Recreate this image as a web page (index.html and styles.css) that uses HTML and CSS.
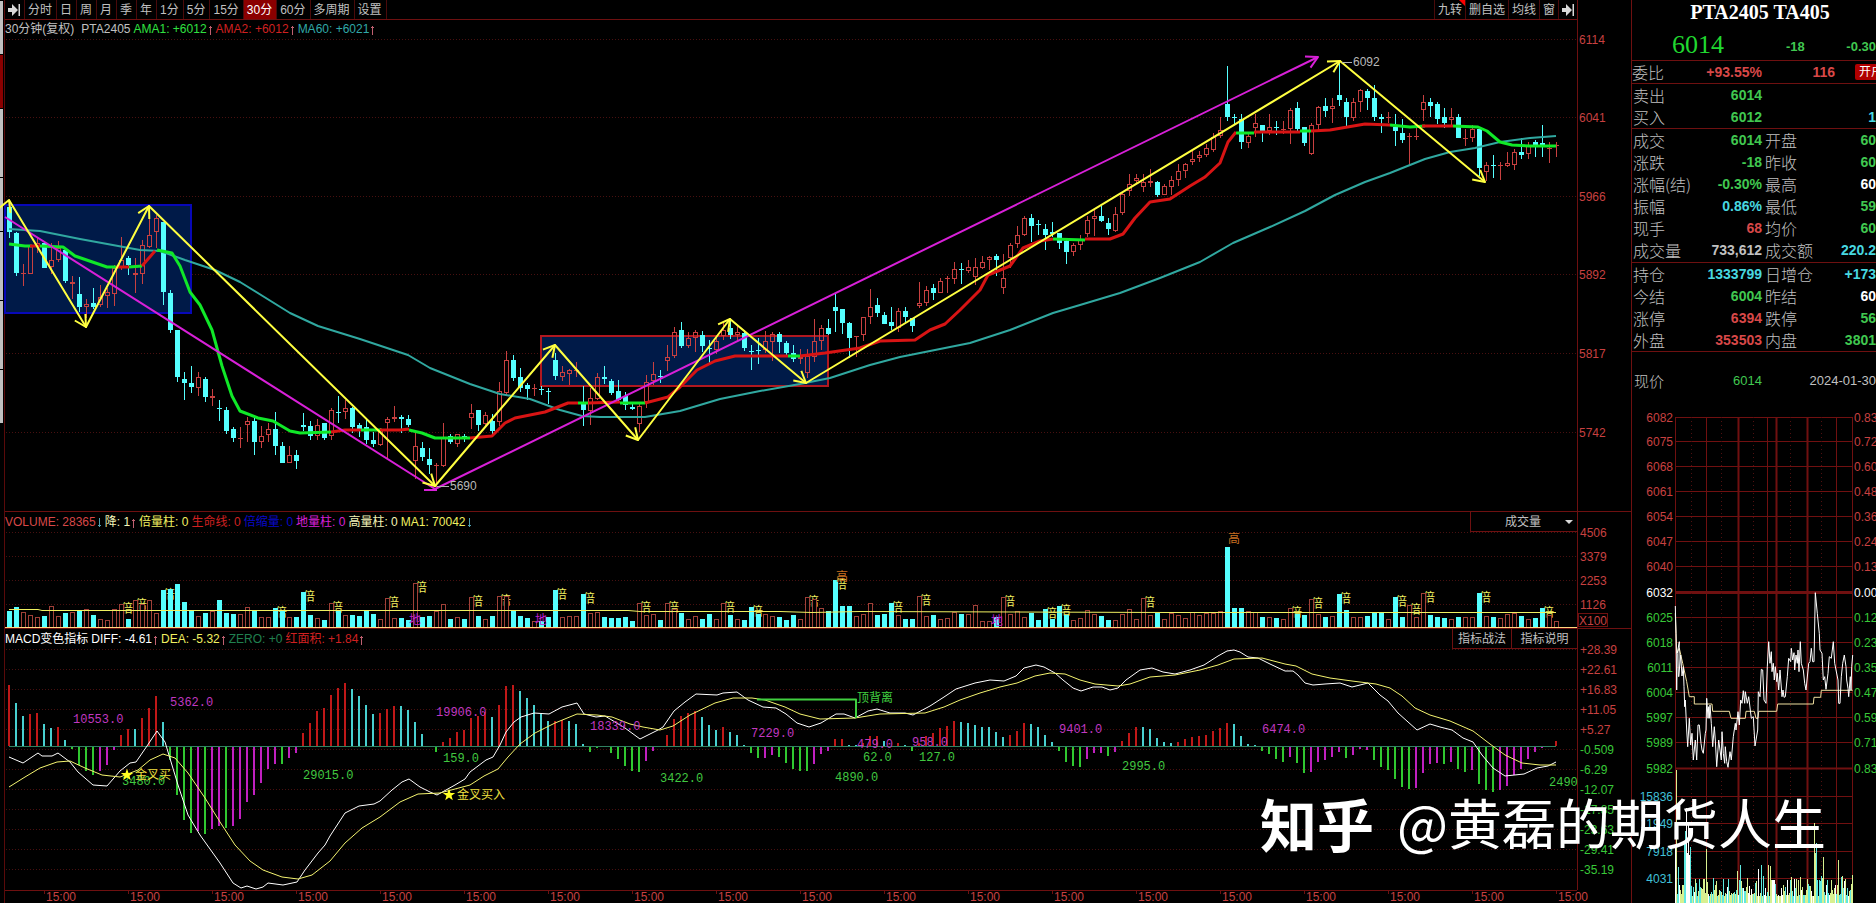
FILE: index.html
```html
<!DOCTYPE html>
<html lang="zh-CN">
<head>
<meta charset="utf-8">
<title>PTA2405 30分钟</title>
<link rel="stylesheet" href="styles.css">
</head>
<body>
<nav class="rail" aria-label="侧栏">
  <span class="rail-tab"></span><span class="rail-tab active"></span><span class="rail-tab tall"></span><span class="rail-tab"></span><span class="rail-tab tall"></span><span class="rail-tab tall"></span><span class="rail-tab"></span>
</nav>
<main class="charts">
  <header class="toolbar">
    <div class="periods">
      <button aria-label="展开"><svg width="12" height="12" viewBox="0 0 12 12"><path d="M0 4h4V0l6 6-6 6V8H0zM10.500 0h1.500v12h-1.500z" fill="#d8d8d8"/></svg></button>
      <button>分时</button><button>日</button><button>周</button><button>月</button><button>季</button><button>年</button><button>1分</button><button>5分</button><button>15分</button><button class="on">30分</button><button>60分</button><button>多周期</button><button>设置</button>
    </div>
    <div class="tools">
      <button class="flag">九转</button><button>删自选</button><button>均线</button><button>窗</button><button aria-label="收起"><svg width="12" height="12" viewBox="0 0 12 12"><path d="M0 4h4V0l6 6-6 6V8H0zM10.500 0h1.500v12h-1.500z" fill="#d8d8d8"/></svg></button>
    </div>
  </header>
  <section class="panel">
    <div class="legend">
      <span class="grey wide">30分钟(复权)</span><span class="grey">PTA2405</span>
      <span class="green">AMA1: +6012<i class="up"></i></span><span class="red">AMA2: +6012<i class="up"></i></span><span class="teal">MA60: +6021<i class="up"></i></span>
    </div>
    <svg id="price" class="plot" viewBox="5 32 1626 479"></svg>
  </section>
  <section class="panel ruled">
    <div class="legend">
      <span class="rose">VOLUME: 28365<i class="down"></i></span><span class="cream">降: 1<i class="up"></i></span><span class="yellow">倍量柱: 0</span><span class="red">生命线: 0</span><span class="blue">倍缩量: 0</span><span class="magenta">地量柱: 0</span><span class="cream">高量柱: 0</span><span class="yellow">MA1: 70042<i class="down"></i></span>
      <span class="picker"><select aria-label="副图指标"><option>成交量</option></select></span>
    </div>
    <svg id="volume" class="plot" viewBox="5 531 1626 97"></svg>
  </section>
  <section class="panel ruled">
    <div class="legend">
      <span class="white">MACD变色指标</span><span class="white">DIFF: -4.61<i class="up"></i></span><span class="yellow">DEA: -5.32<i class="up"></i></span><span class="jade">ZERO: +0</span><span class="red">红面积: +1.84<i class="up"></i></span>
      <span class="links"><button>指标战法</button><button>指标说明</button></span>
    </div>
    <svg id="macd" class="plot" viewBox="5 648 1626 255"></svg>
  </section>
</main>
<aside class="quote">
  <h1>PTA2405 TA405</h1>
  <div class="last"><strong>6014</strong><b>-18</b><b class="end">-0.30</b></div>
  <div class="rows ratio"><div><span>委比</span><b class="rose">+93.55%</b><b class="rose mid">116</b><button>开户</button></div></div>
  <table class="rows">
    <tr><th>卖出</th><td>6014</td><th></th><td></td></tr>
    <tr><th>买入</th><td>6012</td><th></th><td class="cyan">1</td></tr>
  </table>
  <table class="rows roomy">
    <tr><th>成交</th><td>6014</td><th>开盘</th><td>60</td></tr>
    <tr><th>涨跌</th><td>-18</td><th>昨收</th><td>60</td></tr>
    <tr><th>涨幅(结)</th><td>-0.30%</td><th>最高</th><td class="white">60</td></tr>
    <tr><th>振幅</th><td class="cyan">0.86%</td><th>最低</th><td>59</td></tr>
    <tr><th>现手</th><td class="rose">68</td><th>均价</th><td>60</td></tr>
    <tr><th>成交量</th><td class="grey">733,612</td><th>成交额</th><td class="cyan">220.2</td></tr>
  </table>
  <table class="rows">
    <tr><th>持仓</th><td class="cyan">1333799</td><th>日增仓</th><td class="cyan">+173</td></tr>
    <tr><th>今结</th><td>6004</td><th>昨结</th><td class="white">60</td></tr>
    <tr><th>涨停</th><td class="rose">6394</td><th>跌停</th><td>56</td></tr>
    <tr><th>外盘</th><td class="rose">353503</td><th>内盘</th><td>3801</td></tr>
  </table>
  <div class="now"><span>现价</span><em>6014</em><time>2024-01-30</time></div>
  <svg id="intraday" class="plot" viewBox="1632 410 244 493"></svg>
</aside>
<div class="watermark"><b>知乎</b><span>@黄磊的期货人生</span></div>
<script src="chart.js"></script>
</body>
</html>
```

FILE: styles.css
```css
* { box-sizing: border-box; }
body {
  margin: 0;
  min-height: 100vh;
  display: flex;
  position: relative;
  overflow: hidden;
  background: #000;
  color: #c0c0c0;
  font: 12px/16px "Liberation Sans", "Noto Sans CJK SC", sans-serif;
}
button, select {
  font: inherit;
  color: inherit;
  background: none;
  border: 0;
  border-radius: 0;
  margin: 0;
  padding: 0;
  white-space: nowrap;
}
.rail { width: 4px; padding: 1px 1px 0 0; display: flex; flex-direction: column; gap: 1px; }
.rail-tab { height: 53px; background: #c0c0c0; }
.rail-tab.active { background: #8b0000; }
.rail-tab.tall { height: 68px; }

.charts {
  flex: 1;
  min-width: 0;
  border-left: 1px solid #5a0a0a;
  background: linear-gradient(#6e1010, #6e1010) right 53px top / 1px 890px no-repeat;
}
.toolbar {
  display: flex;
  justify-content: space-between;
  height: 20px;
  margin-right: 54px;
  border-bottom: 1px solid #6e1010;
}
.periods, .tools { display: flex; }
.toolbar button {
  height: 19px;
  padding: 1px 4px 0 3px;
  display: flex;
  align-items: center;
  border-right: 1px solid #4a0a0a;
}
.toolbar .on { background: #8b0000; color: #fff; }
.toolbar .tools button { padding: 1px 3px 0; border-right: 0; border-left: 1px solid #4a0a0a; }
.flag { position: relative; }
.flag::after {
  content: "";
  position: absolute;
  top: 0;
  right: 0;
  border: 3px solid;
  border-color: #f00 #f00 transparent transparent;
}

.panel { display: flex; flex-direction: column; }
.ruled { border-top: 1px solid #6e1010; }
.legend { display: flex; gap: 3px; height: 12px; line-height: 19px; white-space: nowrap; }
.ruled .legend { height: 19px; line-height: 20px; }
.wide { margin-right: 4px; }
.plot { display: block; width: 100%; height: auto; overflow: visible; }
.legend i { display: inline-block; width: 5px; height: 10px; margin-left: 1px; vertical-align: -2px; }
.up { background: linear-gradient(#c06070, #c06070) 2px 1px / 1px 9px no-repeat, linear-gradient(#c06070, #c06070) 1px 2px / 3px 1px no-repeat; }
.down { background: linear-gradient(#50a0b0, #50a0b0) 2px 0 / 1px 9px no-repeat, linear-gradient(#50a0b0, #50a0b0) 1px 7px / 3px 1px no-repeat; }
.picker {
  position: relative;
  margin: 0 53px 0 auto;
  width: 108px;
  height: 20px;
  border: 1px solid #6e1010;
  border-top: 0;
}
.picker select { width: 100%; height: 19px; appearance: none; padding-right: 2px; text-align-last: center; }
.picker::after {
  content: "";
  position: absolute;
  right: 4px;
  top: 8px;
  border: 4px solid transparent;
  border-top-color: #d8d8d8;
  border-bottom: 0;
}
.links { margin: 0 53px 0 auto; display: flex; height: 20px; }
.links button { width: 60px; border: 1px solid #6e1010; border-top: 0; }
.links button + button { width: 66px; border-left: 0; }

.grey { color: #c0c0c0; }
.white { color: #fff; }
.green { color: #30e040; }
.red { color: #d02020; }
.rose { color: #d84848; }
.teal { color: #30a8a8; }
.jade { color: #208050; }
.cyan { color: #48d8e0; }
.yellow { color: #f0f060; }
.cream { color: #f4f4b8; }
.blue { color: #0808c8; }
.magenta { color: #d820d8; }

.quote {
  width: 245px;
  flex: none;
  overflow: hidden;
  border-left: 1px solid #6e1010;
  color: #40c850;
  font-size: 14px;
}
.quote h1 {
  margin: 0;
  height: 28px;
  padding-left: 12px;
  font: bold 20px/24px "Liberation Serif", serif;
  color: #fff;
  text-align: center;
}
.last { display: grid; grid-template-columns: 114px 1fr auto; height: 32px; line-height: 38px; padding-left: 40px; font-size: 13px; }
.last strong { font: 26px/34px "Liberation Serif", serif; color: #20d830; }
.rows { border-top: 1px solid #6e1010; }
.ratio div { display: grid; grid-template-columns: 50px 80px 73px 1fr; height: 22px; align-items: center; text-align: right; }
.ratio span, .now span, th { color: #c0c0c0; font: 300 16px/20px "Noto Sans CJK SC", sans-serif; text-align: left; white-space: nowrap; }
.ratio button { width: 32px; height: 16px; margin-left: 20px; background: #b00000; color: #fff; font-size: 12px; border-radius: 2px; }
table { width: 100%; border-collapse: separate; border-spacing: 0; table-layout: fixed; }
th, td { padding: 0; height: 22px; line-height: 20px; }
th:nth-child(1) { width: 56px; padding-left: 1px; }
td:nth-child(2) { width: 74px; }
th:nth-child(3) { width: 54px; padding-left: 3px; }
td { text-align: right; font-weight: bold; }
.roomy { padding-bottom: 1px; }
.now {
  display: grid;
  grid-template-columns: 50px 80px 1fr;
  align-items: center;
  text-align: right;
  height: 59px;
  font-size: 13px;
  border-top: 1px solid #6e1010;
}
.now span { font-size: 15px; padding-left: 2px; }
.now em { font-style: normal; }
.now time { color: #c0c0c0; }
.watermark {
  position: absolute;
  left: 1260px;
  top: 782px;
  display: flex;
  gap: 23px;
  align-items: center;
  color: #fff;
  font: 400 54px/80px "Noto Sans CJK SC", sans-serif;
  white-space: nowrap;
}
.watermark b { font-size: 57px; font-weight: 700; line-height: 76px; }

.plot text { font: 12px "Liberation Sans", "Noto Sans CJK SC", sans-serif; dominant-baseline: central; }
.plot .mono { font: 12px "Liberation Mono", monospace; }
.grid { stroke: #481010; stroke-dasharray: 1 2; }
```

FILE: chart.js
```js
const RED = '#c84040', CYAN = '#5ff', X0 = 9.3, STEP = 7;
const cx = i => Math.round(X0 + i * STEP);
const line = (x1, y1, x2, y2, stroke, w = 1, extra = '') =>
  `<line x1="${x1}" y1="${y1}" x2="${x2}" y2="${y2}" stroke="${stroke}" stroke-width="${w}" ${extra}/>`;
const rect = (x, y, w, h, fill, stroke = 'none', sw = 1) =>
  `<rect x="${x}" y="${y}" width="${w}" height="${h}" fill="${fill}" stroke="${stroke}" stroke-width="${sw}"/>`;
const text = (x, y, s, fill, extra = '') => `<text x="${x}" y="${y}" fill="${fill}" ${extra}>${s}</text>`;
const poly = (pts, stroke, w = 1) =>
  `<polyline points="${pts}" fill="none" stroke="${stroke}" stroke-width="${w}" stroke-linejoin="round"/>`;
const grid = ys => ys.map(y => `<line class="grid" x1="6" x2="1577" y1="${y + .5}" y2="${y + .5}"/>`).join('');

/* one bar: direction, high, body top, body bottom, low */
const candles = `c 200 207 232 238|c 232 233 273 276|r 264 273 273 286|r 246 246 274 274|r 238 243 246 253|c 243 243 268 268|r 243 260 267 274|r 241 248 260 262|c 248 250 281 283|r 276 282 284 299
c 277 294 307 312|r 299 304 307 318|c 288 303 307 309|r 285 297 305 307|r 288 292 296 308|r 265 268 294 306|r 237 260 268 270|c 256 258 265 275|r 258 273 275 293|r 240 245 274 284
r 210 235 247 248|r 215 218 232 248|c 222 222 292 305|c 290 293 330 333|c 330 330 377 382|c 372 379 383 400|c 366 383 387 393|r 372 377 388 396|c 377 379 397 402|r 389 396 398 406
c 400 408 409 421|c 407 410 431 434|c 427 429 438 442|r 427 438 438 448|r 417 421 425 442|c 417 421 442 455|r 426 436 442 448|r 423 429 435 442|c 412 429 446 455|c 442 446 463 463
r 446 455 463 463|c 450 455 461 469|c 413 425 427 431|c 421 426 436 440|r 419 425 436 440|c 423 423 438 440|r 408 410 436 440|c 396 412 413 423|r 400 408 412 419|c 407 408 427 433
c 423 425 429 437|c 418 427 440 444|c 432 440 444 447|r 428 430 445 446|r 417 419 423 458|r 406 417 419 422|c 415 417 419 433|c 415 419 425 427|r 432 446 461 479|c 442 448 457 461
c 448 459 465 474|r 463 465 466 487|r 423 437 466 467|c 434 436 442 444|r 434 434 444 447|c 434 436 437 442|r 404 413 418 429|c 410 410 425 431|r 412 415 424 426|c 414 421 431 434
r 382 391 422 426|r 351 360 393 396|c 355 360 378 381|c 368 377 388 392|c 383 385 389 400|r 384 388 388 396|c 386 389 390 395|c 388 391 392 404|c 353 360 376 380|r 366 372 377 381
r 369 370 374 385|r 362 370 370 377|c 386 402 410 426|r 388 398 411 425|r 373 377 399 400|c 366 377 379 384|c 379 381 393 395|c 380 391 400 403|c 392 396 405 410|c 402 407 409 410
r 404 406 424 432|r 375 382 402 408|r 362 374 381 385|c 370 376 377 383|r 345 357 361 371|r 327 332 356 358|c 322 330 346 348|r 332 338 346 348|r 330 332 338 352|c 331 335 346 352
c 340 348 349 363|r 338 341 350 354|r 322 330 336 340|c 320 328 335 339|r 326 332 335 342|c 330 333 348 351|c 345 351 352 370|c 338 350 351 364|r 331 341 350 353|r 332 334 342 361
c 332 334 342 353|c 341 343 353 355|c 345 353 359 362|r 349 357 359 364|r 349 356 373 378|r 319 341 357 362|r 325 328 341 350|c 319 328 334 335|c 293 307 311 332|c 309 309 323 334
c 322 323 338 358|r 336 336 337 357|r 317 317 335 341|r 289 307 317 324|c 298 305 313 317|c 312 315 324 324|c 307 322 326 330|r 308 311 328 332|c 307 311 317 322|c 318 318 326 332
r 282 303 306 308|r 286 290 303 306|c 284 288 293 300|r 278 281 293 293|r 276 278 278 293|r 262 269 279 284|c 263 269 270 284|r 260 267 271 273|r 258 267 277 285|r 256 262 268 269
r 256 257 260 270|c 254 256 260 276|r 254 278 288 294|r 243 245 258 268|r 226 235 244 248|r 216 218 235 236|c 214 218 226 242|c 220 224 225 235|c 224 229 235 250|c 222 232 234 237
c 233 233 243 249|c 240 241 252 264|r 243 245 252 256|r 235 240 245 250|r 216 220 234 237|r 210 216 219 236|c 206 216 221 222|c 218 223 229 235|r 207 214 231 232|r 193 194 213 215
r 174 184 191 196|r 174 178 181 184|r 174 182 187 192|r 169 181 183 187|c 181 182 195 197|r 184 186 195 195|r 176 180 187 195|r 164 171 180 186|r 163 164 171 178|r 151 159 162 165
r 151 155 158 162|r 144 148 155 157|r 133 137 150 152|r 117 130 136 138|c 66 104 117 121|c 114 117 118 125|c 114 119 142 149|r 133 136 143 148|r 114 123 128 137|c 125 125 131 142
r 114 127 131 135|c 121 127 128 135|r 121 129 129 134|r 108 110 129 144|c 102 108 129 131|c 127 127 143 146|r 123 125 154 155|r 106 107 125 130|c 98 106 111 117|r 98 106 109 123
c 60 95 100 106|c 98 102 117 127|r 98 102 118 121|r 89 90 102 112|c 89 91 98 110|c 85 98 117 121|c 114 117 119 133|r 112 117 118 123|c 114 127 131 146|c 119 133 140 143
r 133 136 136 165|r 124 136 137 140|r 95 102 110 121|c 98 102 106 117|c 102 104 119 124|c 108 117 123 128|r 108 117 120 125|c 114 117 138 138|r 129 138 138 146|r 125 129 138 142
c 127 129 168 176|r 162 165 172 181|c 155 165 166 178|r 162 165 166 180|r 152 163 166 167|r 149 152 165 170|c 138 152 155 159|r 142 146 154 159|c 140 142 146 157|c 125 143 147 157
r 142 148 149 163|r 142 145 146 157`.split(/[|\n]/).map(s => s.trim().split(' ').map((v, i) => i ? +v : v));

const volTops = `611 607 612 615 617 616 606 616 613 612 611 609 615 619 620 609 604 619 600 604 600 613 590 589 584 602 611 616 613 611 600 613 614 614 607 611 617 617 608 610 617 617 592 615 618 620 603 610 615 615 616 611 614 619 598 618 618 620 583 617 616 611 604 619 617 619
597 616 619 616 596 596 611 616 618 621 621 617 590 617 616 616 594 613 612 617 618 618 617 621 603 615 614 620 603 609 613 619 616 619 614 619 603 615 619 620 607 614 614 616 617 620 615 619 597 599 608 611 580 606 606 616 614 603 615 614 603 615 619 619 596 616
615 619 618 612 614 614 605 621 621 617 597 614 611 617 613 620 609 619 606 615 620 618 610 614 616 620 620 614 609 619 598 615 613 619 613 615 618 612 615 613 613 611 547 608 608 611 612 617 617 618 619 608 614 615 599 614 617 616 594 610 617 617 616 613 613 619 597 617
605 617 593 615 617 618 619 617 617 617 593 616 617 618 614 613 616 619 618 608 615 621`.trim().split(/\s+/).map(Number);

/* histogram ends with a colour letter: r, c above zero; g, m below */
const hist = `r685 c703 c716 r714 r713 c724 c728 r727 c740 g749 g765 g771 g775 m771 m765 m750 r735 r729 c729 r718 r708 r696 c722 g760 g795 g820 g833 m831 g834 m829 m826 g828 m826 m819 m802 m795 m783 m769 m764 g764 m758 m753 r733 r723 r711 r708 r695 r688 r683 c689 c696 c705 c714 r713 r709 r706 c706 c710 c722 c734 c746 g752 r742 r738 r732 r730
r718 r716 r712 c717 r705 r686 r685 c691 c698 c705 c714 c721 r721 r720 c721 c724 c744 g752 g748 c746 g753 g759 g766 g771 g772 m761 m751 c746 r735 r719 r716 r713 r711 c717 c725 c730 r727 c732 c735 c745 g753 g758 m758 m755 g757 g763 g769 g771 g771 m764 m754 m751 r739 r739 c745 c745 r743 r736 r736 c741 c746 r743 c745 g751 r743 r736
r733 r728 r726 r721 c722 c723 c725 c727 c727 c732 c737 r735 r731 r723 c724 c727 c735 c742 g751 g762 g766 g767 m759 m753 m753 g756 m752 r741 r733 r727 c727 c729 c738 c742 c743 r742 r739 r737 r736 r735 r731 r728 r723 c724 c736 c744 c745 g751 g754 g759 g762 m757 g763 g773 m772 m762 m760 m757 m752 g758 m755 m749 m750 g760 g767 g770 g779 g787
g789 m788 m773 m764 m763 g764 m762 g769 g772 m770 g784 g790 g792 m790 m786 m775 m769 m759 m752 m748 c746 r741`.trim().split(/\s+/);

function arrowHead(x1, y1, x2, y2, color) {
  const a = Math.atan2(y2 - y1, x2 - x1), L = 13;
  const p = d => `${(x2 - L * Math.cos(a + d)).toFixed(1)},${(y2 - L * Math.sin(a + d)).toFixed(1)}`;
  return poly(`${p(.5)} ${x2},${y2} ${p(-.5)}`, color, 2);
}

function drawPrice() {
  let s = grid([39, 117, 196, 274, 353, 432]);
  s += rect(5, 205, 186, 108, '#001a48', '#0808b8', 2) + rect(541, 336, 287, 50, '#001a48', '#b01820', 2);
  candles.forEach(([t, hi, top, bot, lo], i) => {
    const x = cx(i), c = t === 'r' ? RED : CYAN;
    if (t === 'c') s += rect(x, hi, 1, lo - hi, c) + rect(x - 2, top, 5, Math.max(1, bot - top), c);
    else s += rect(x, hi, 1, top - hi, c) + rect(x, bot, 1, lo - bot, c) +
      (bot - top < 2 ? rect(x - 2, top, 5, 1, c) : rect(x - 1.5, top + .5, 4, bot - top - 1, 'none', c));
  });
  s += poly('9,229 40,231 80,239 140,250 160,251 185,260 215,270 240,282 290,313 318,326 360,339 408,355 430,368 470,384 500,394 530,399 560,410 582,416 600,417 645,417 680,411 720,399 760,391 800,384 830,378 870,365 900,357 950,347 970,343 1010,330 1053,313 1080,305 1120,293 1160,278 1200,262 1233,243 1270,227 1305,211 1335,195 1365,182 1390,173 1425,159 1450,152 1475,148 1500,142 1530,138 1556,136', '#30a8a0', 2);
  const G = '#10e828', R = '#d81414';
  [[G, '9,244 25,246 32,246'], [R, '30,246 40,246'], [G, '40,246 63,247 75,256 107,267 116,267'], [R, '116,267 129,267'], [G, '129,267 142,266'], [R, '142,266 155,251'],
   [G, '157,250 172,253 180,266 190,292 200,305 212,330 222,366 232,396 240,411 258,418 273,421 290,431 300,433 331,432'], [R, '331,432 345,430 361,430'], [G, '361,430 382,430'], [R, '380,430 400,430 409,429'],
   [G, '409,430 422,433 435,438 470,438'], [R, '470,438 492,436 505,423 515,418 545,412 568,403 578,403'], [G, '578,403 588,403'], [R, '588,403 620,402'], [G, '620,403 645,403'],
   [R, '645,403 668,397 680,387 697,370 715,361 735,356 788,356'], [G, '788,356 800,356'], [R, '800,356 825,353 860,348 880,341 915,340 930,330 945,324 960,310 980,290 988,275 1010,266 1023,248 1040,241 1053,239'],
   [G, '1053,239 1085,240'], [R, '1085,239 1110,239 1123,234 1135,218 1150,202 1170,199 1190,186 1205,177 1220,163 1228,142 1236,132'], [G, '1236,133 1254,133'], [R, '1254,132 1300,132'], [G, '1300,131 1311,131'],
   [R, '1311,131 1330,130 1365,124 1390,125'], [G, '1390,125 1410,127 1425,126'], [R, '1422,126 1453,126'], [G, '1453,126 1478,127 1487,131 1500,142 1512,145 1530,146 1556,146']]
    .forEach(([c, p]) => { s += poly(p, c, 3); });
  const M = '#d820d8', Y = '#ffff40';
  s += poly('5,217 435,489 1318,57', M, 2) + poly('424,490 437,490', M, 2) + arrowHead(435, 489, 1318, 57, M);
  const z = [[5, 210], [9, 200], [86, 327], [149, 206], [435, 486], [555, 345], [638, 440], [730, 319], [806, 383], [1340, 61], [1485, 182]];
  s += poly(z.slice(1).join(' '), Y, 2);
  for (let k = 1; k < z.length; k++) s += arrowHead(...z[k - 1], ...z[k], Y);
  s += line(437, 486.5, 449, 486.5, '#b0b0b0') + text(450, 486, '5690', '#b8b8b8');
  s += line(1342, 62.5, 1352, 62.5, '#b0b0b0') + text(1353, 62, '6092', '#b8b8b8');
  [[6114, 40], [6041, 118], [5966, 197], [5892, 275], [5817, 354], [5742, 433]].forEach(([v, y]) => { s += text(1579, y, v, RED); });
  document.getElementById('price').innerHTML = s;
}

function drawVolume() {
  let s = grid([532, 556, 580, 604]);
  [16, 18, 22, 38, 42, 46, 54, 58, 66, 70, 78, 82, 90, 94, 102, 106, 114, 118, 126, 130, 142, 148, 150, 162, 183, 186, 190, 198, 200, 202, 210, 219]
    .forEach(i => { s += text(cx(i), volTops[i] + 5, '倍', '#f0f060'); });
  volTops.forEach((y, i) => {
    const x = cx(i);
    s += candles[i][0] === 'c' ? rect(x - 2, y, 5, 627 - y, CYAN) : rect(x - 1.5, y + .5, 4, 627 - y, '#000', '#a04038');
  });
  s += text(836, 577, '高', '#c87020') + text(1228, 539, '高', '#c87020');
  [[409, 620], [535, 620], [991, 621]].forEach(([x, y]) => { s += text(x, y, '地', '#c020d0'); });
  s += poly('9,609.5 38,609.5 42,610.5 628,610.5 640,611.5 780,611.5 812,612.5 860,611.5 1170,612.5 1230,612.5 1556,612.5', '#f0f060');
  s += line(5, 627.5, 1577, 627.5, '#ffd880');
  [[4506, 533], [3379, 557], [2253, 581], [1126, 605]].forEach(([v, y]) => { s += text(1580, y, v, RED); });
  s += rect(1578.5, 613.5, 29, 13, 'none', '#6e1010') + text(1579, 621, 'X100', RED);
  document.getElementById('volume').innerHTML = s;
}

function drawMacd() {
  let s = grid([649, 669, 689, 709, 729, 749, 769, 789, 809, 829, 849, 869]);
  const col = { r: '#c01818', c: '#48d0d0', g: '#30c830', m: '#c020c0' };
  hist.forEach((h, i) => {
    const y = +h.slice(1), x = cx(i) - 1;
    s += y < 746 ? rect(x, y, 2, 746 - y, col[h[0]]) : rect(x, 746, 2, y - 746, col[h[0]]);
  });
  s += line(9, 746.5, 1556, 746.5, '#308060');
  s += poly('9,757 23,763 38,753 42,756 52,756 58,753 70,762 78,772 93,785 107,786 120,771 130,763 136,762 147,746 157,731 165,742 178,785 188,815 200,835 220,863 233,883 241,888 247,886 256,889 263,887 268,883 283,885 297,882 305,870 318,853 325,845 330,836 345,813 359,806 374,804 380,801 392,790 402,782 409,779 420,787 430,792 437,795 455,785 465,779 470,772 486,760 493,757 500,745 506,732 514,722 521,717 534,713 549,714 562,707 577,703 584,714 596,717 605,716 615,722 625,728 640,739 658,730 663,727 674,711 685,702 696,694 717,695 723,693 737,692 748,700 763,707 776,708 786,714 797,723 809,727 821,723 836,714 844,714 855,718 868,711 877,709 890,713 905,713 913,715 930,706 944,697 956,689 975,683 990,680 1004,681 1016,676 1024,668 1036,665 1044,667 1055,673 1063,680 1073,688 1081,691 1093,687 1102,687 1110,690 1118,688 1126,680 1140,670 1152,668 1163,672 1175,674 1190,670 1204,665 1218,656 1227,651 1234,650 1240,652 1248,657 1258,658 1270,664 1285,671 1293,671 1298,675 1305,683 1313,685 1325,684 1340,683 1352,687 1368,683 1380,695 1388,701 1398,713 1417,730 1430,724 1440,727 1452,730 1463,738 1473,742 1482,755 1493,768 1505,776 1524,774 1537,768 1548,766 1556,762', '#fff');
  s += poly('9,787 25,777 40,768 57,762 70,761 85,768 102,775 120,777 138,770 150,760 163,754 175,758 188,773 205,798 220,822 235,845 250,861 263,870 282,877 298,879 312,875 330,861 345,843 362,828 380,817 400,802 418,794 440,793 455,789 470,785 484,776 498,769 508,757 520,744 535,733 555,723 577,714 597,715 612,717 630,724 643,727 660,730 673,726 690,715 715,703 733,698 752,698 765,700 785,707 800,714 820,719 855,718 880,714 925,713 944,707 960,700 980,693 1000,687 1017,683 1035,676 1050,673 1065,674 1080,680 1095,684 1118,686 1130,684 1150,677 1175,675 1200,670 1218,665 1234,659 1262,658 1285,664 1296,666 1312,674 1330,678 1352,681 1376,684 1390,688 1402,696 1415,708 1430,715 1450,721 1473,731 1490,744 1505,755 1522,763 1540,765 1556,765', '#f4f470');
  const m = '#c038c0', g = '#40c840';
  [[73, 720, '10553.0', m], [170, 703, '5362.0', m], [122, 782, '3480.0', g], [303, 776, '29015.0', g], [436, 713, '19906.0', m], [443, 759, '159.0', g], [590, 727, '18339.0', m], [660, 779, '3422.0', g], [751, 734, '7229.0', m], [835, 778, '4890.0', g], [857, 745, '479.0', m], [863, 758, '62.0', g], [912, 743, '958.0', m], [919, 758, '127.0', g], [1059, 730, '9401.0', m], [1122, 767, '2995.0', g], [1262, 730, '6474.0', m], [1549, 783, '2490', g]]
    .forEach(([x, y, v, c]) => { s += text(x, y, v, c, 'class="mono"'); });
  s += poly('757,699.5 856,699.5 856,718', '#40d040', 2) + text(857, 698, '顶背离', '#40d040');
  [[127, 775, '金叉买'], [449, 795, '金叉买入']].forEach(([x, y, t]) => {
    let p = '';
    for (let k = 0; k < 10; k++) {
      const a = -Math.PI / 2 + k * Math.PI / 5, r = k % 2 ? 2.6 : 6.5;
      p += `${(x + r * Math.cos(a)).toFixed(1)},${(y + r * Math.sin(a)).toFixed(1)} `;
    }
    s += `<polygon points="${p}" fill="#ff2"/>` + text(x + 8, y, t, '#f0e040');
  });
  ['+28.39', '+22.61', '+16.83', '+11.05', '+5.27', '-0.509', '-6.29', '-12.07', '-17.85', '-23.63', '-29.41', '-35.19']
    .forEach((v, i) => { s += text(1580, 650 + 20 * i, v, v[0] === '+' ? RED : '#38c838'); });
  s += line(5, 890.5, 1577, 890.5, '#6e1010');
  for (let x = 44; x < 1570; x += 84) s += line(x + .5, 890, x + .5, 894, '#6e1010') + text(x + 2, 897, '15:00', RED);
  document.getElementById('macd').innerHTML = s;
}

function drawIntraday() {
  let s = '';
  const ys = [417, 441, 466, 491, 516, 541, 566, 592, 617, 642, 667, 692, 717, 742, 768, 796, 823, 851, 878];
  ys.forEach(y => { s += line(1675, y + .5, 1853, y + .5, '#701010', y === 592 ? 3 : y === 768 ? 2 : 1); });
  [[1675, 1], [1706, 1], [1738, 2], [1767, 1], [1776, 2], [1807, 2], [1836, 1], [1852, 1]].forEach(([x, w]) => { s += line(x + .5, 417, x + .5, 903, '#701010', w); });
  [1691, 1721, 1753, 1790, 1821].forEach(x => { s += line(x + .5, 417, x + .5, 903, '#501010', 1, 'stroke-dasharray="1 3"'); });
  const left = [6082, 6075, 6068, 6061, 6054, 6047, 6040, 6032, 6025, 6018, 6011, 6004, 5997, 5989, 5982, 15836, 11949, 7918, 4031];
  const right = ['0.83', '0.72', '0.60', '0.48', '0.36', '0.24', '0.13', '0.00', '0.12', '0.23', '0.35', '0.47', '0.59', '0.71', '0.83'];
  const tone = i => i < 7 ? RED : i === 7 ? '#fff' : i < 15 ? '#38c838' : '#40c0d8';
  ys.forEach((y, i) => {
    s += text(1673, y + 1, left[i], tone(i), 'text-anchor="end"');
    if (right[i]) s += text(1854, y + 1, right[i], tone(i));
  });
  const peaks = { 0: 55, 1: 133, 3: 36, 9: 60, 10: 72, 11: 95, 12: 50, 13: 80, 14: 48, 15: 56, 31: 54, 62: 32, 65: 38, 83: 34, 86: 38, 93: 38, 95: 37, 116: 26, 132: 24, 139: 80, 140: 50, 141: 60, 148: 46, 163: 43, 177: 28 };
  let seed = 7;
  for (let k = 0; k < 178; k++) {
    seed = (seed * 16807) % 2147483647;
    const r = seed / 2147483647, h = peaks[k] || 7 + r * r * 20;
    s += rect(1675 + k, Math.round(903 - h), 1, Math.round(h), seed % 5 < 2 ? '#5fe8e0' : seed % 5 < 4 ? '#d8f090' : '#fff');
  }
  const at = p => p.trim().split(' ').map(q => { const [x, y] = q.split(',').map(Number); return `${(1656 + x / 3).toFixed(1)},${(500 + y / 3).toFixed(1)}`; }).join(' ');
  s += poly(at('58,340 62,460 70,445 80,490 92,545 100,590 115,590 115,612 168,612 170,634 220,634 225,655 268,655 270,634 295,634 300,655 306,655 308,634 362,634 365,612 472,612 474,592 494,592 496,571 590,571'), '#f0e0a0');
  s += poly(at('58,318 60,400 62,570 64,460 70,425 68,530 74,465 78,528 82,500 84,560 86,620 88,600 92,690 95,740 100,655 104,735 108,700 112,780 118,720 122,780 126,675 130,675 135,730 138,750 142,760 148,700 150,690 152,595 156,655 158,620 160,655 162,615 166,670 170,740 175,680 178,720 182,800 188,720 192,750 196,780 198,695 202,760 206,790 208,740 212,785 216,802 222,755 226,780 232,710 238,670 240,690 246,635 250,675 254,600 258,610 262,572 266,610 268,575 274,610 278,590 286,655 292,650 297,738 305,690 307,575 312,590 316,508 320,510 324,600 330,610 334,500 338,425 342,490 346,455 348,515 352,490 355,540 358,500 362,545 364,520 368,570 372,510 378,590 381,570 384,592 388,590 394,530 398,475 404,485 406,445 410,480 414,458 416,510 420,465 424,490 426,450 429,515 433,425 436,490 442,510 446,550 450,570 458,490 462,485 466,445 470,485 474,485 478,278 484,340 490,400 492,450 498,460 502,540 506,530 510,568 516,520 520,470 526,475 532,425 536,490 540,510 546,540 548,610 552,610 556,530 560,490 565,465 570,500 572,540 576,565 578,590 583,530 585,570 587,500 590,465'), '#fff');
  document.getElementById('intraday').innerHTML = s;
}

drawPrice();
drawVolume();
drawMacd();
drawIntraday();
```
